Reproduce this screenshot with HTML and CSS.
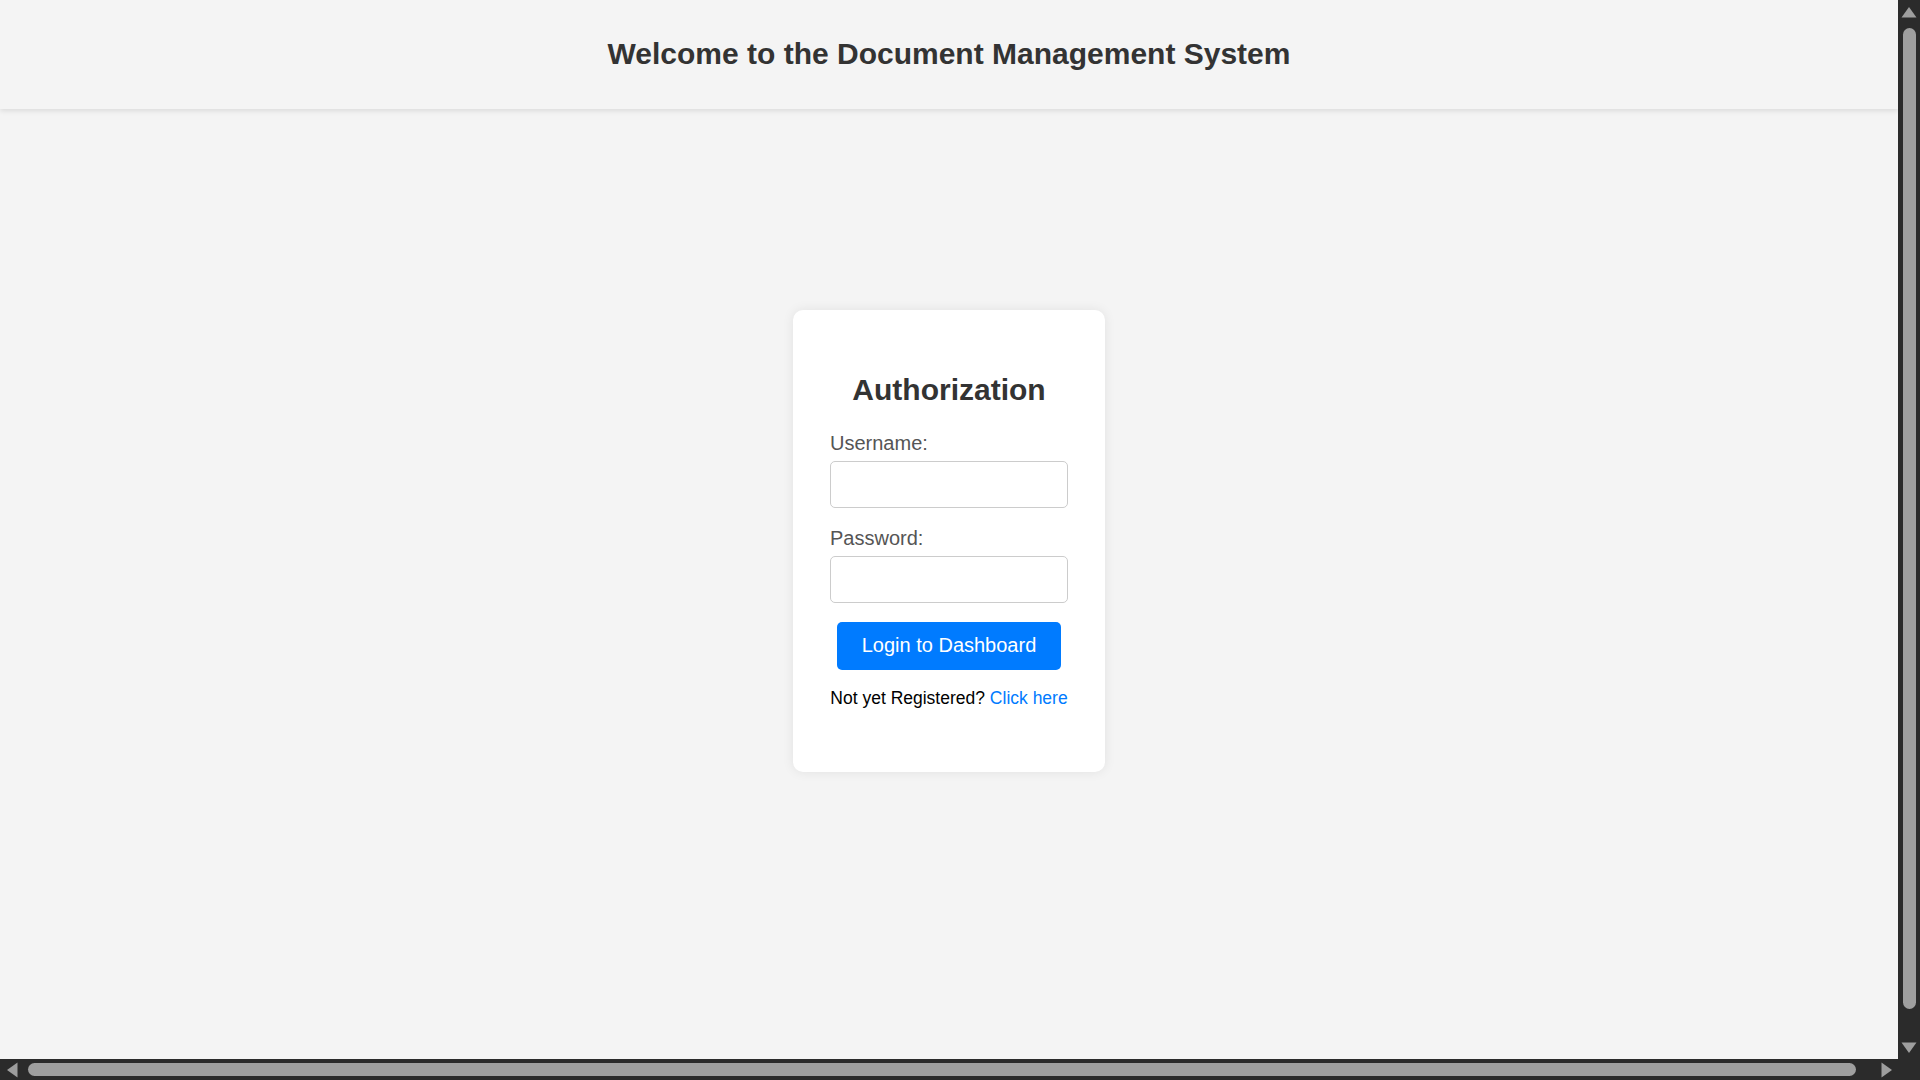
FILE: index.html
```html
<!DOCTYPE html>
<html lang="en">
<head>
<meta charset="utf-8">
<title>Document Management System</title>
<link rel="stylesheet" href="styles.css">
</head>
<body>
<div class="page">
  <header class="site-header">
    <h1 class="site-title">Welcome to the Document Management System</h1>
  </header>
  <main class="main">
    <form class="card">
      <h2 class="card-title">Authorization</h2>
      <label class="field-label" for="username">Username:</label>
      <input class="field-input" id="username" type="text">
      <label class="field-label" for="password">Password:</label>
      <input class="field-input" id="password" type="password">
      <div class="actions">
        <button class="btn" type="button">Login to Dashboard</button>
      </div>
      <p class="register">Not yet Registered? <a class="register-link" href="#">Click here</a></p>
    </form>
  </main>
</div>

<div class="sb-v" aria-hidden="true">
  <svg class="sb-arrow sb-up" width="16" height="11" viewBox="0 0 16 11"><path d="M8 0 L15.5 10.5 L0.5 10.5 Z" fill="#9e9e9e"/></svg>
  <div class="sb-thumb-v"></div>
  <svg class="sb-arrow sb-down" width="16" height="11" viewBox="0 0 16 11"><path d="M0.5 0.5 L15.5 0.5 L8 11 Z" fill="#9e9e9e"/></svg>
</div>
<div class="sb-h" aria-hidden="true">
  <svg class="sb-arrow sb-left" width="11" height="16" viewBox="0 0 11 16"><path d="M0 8 L10.5 0.5 L10.5 15.5 Z" fill="#9e9e9e"/></svg>
  <div class="sb-thumb-h"></div>
  <svg class="sb-arrow sb-right" width="11" height="16" viewBox="0 0 11 16"><path d="M0.5 0.5 L11 8 L0.5 15.5 Z" fill="#9e9e9e"/></svg>
</div>
<div class="sb-corner" aria-hidden="true"></div>
</body>
</html>
```

FILE: styles.css
```css
* { box-sizing: border-box; }

html, body {
  margin: 0;
  padding: 0;
  background: #f4f4f4;
  font-family: "Liberation Sans", Arial, sans-serif;
  overflow: hidden;
}

.page {
  margin-right: 22px;
  min-height: 1059px;
}

.site-header {
  background: #f4f4f4;
  height: 109px;
  padding-top: 37px;
  box-shadow: 0 2px 5px rgba(0, 0, 0, 0.1);
  text-align: center;
  position: relative;
}

.site-title {
  margin: 0;
  font-size: 30px;
  font-weight: bold;
  line-height: normal;
  color: #333;
}

.main {
  padding-top: 201px;
}

.card {
  width: 312px;
  margin: 0 auto;
  padding: 37px 37px 37.5px;
  background: #fff;
  border-radius: 10px;
  box-shadow: 0 0 12px rgba(0, 0, 0, 0.08);
}

.card-title {
  margin: 26px 0 25px;
  text-align: center;
  font-size: 30px;
  font-weight: bold;
  line-height: normal;
  color: #333;
}

.field-label {
  display: block;
  font-size: 20px;
  line-height: 23px;
  color: #555;
  margin-bottom: 6px;
}

.field-input {
  display: block;
  width: 100%;
  height: 47px;
  margin: 0 0 19px;
  padding: 12px;
  border: 1px solid #ccc;
  border-radius: 5px;
  font-size: 20px;
  font-family: inherit;
  background: #fff;
}

.actions {
  text-align: center;
}

.btn {
  height: 48px;
  padding: 0 25px 1px;
  border: none;
  border-radius: 5px;
  background: #007bff;
  color: #fff;
  font-family: inherit;
  font-size: 20px;
  line-height: 47px;
  cursor: pointer;
}

.register {
  margin: 18px 0 26px;
  text-align: center;
  font-size: 17.5px;
  line-height: 20px;
  color: #000;
}

.register-link {
  color: #007bff;
  text-decoration: none;
}

/* browser scrollbars overlay */
.sb-v {
  position: fixed;
  top: 0;
  right: 0;
  width: 22px;
  height: 1059px;
  background: #2b2b2b;
}

.sb-h {
  position: fixed;
  left: 0;
  bottom: 0;
  width: 1898px;
  height: 21px;
  background: #2b2b2b;
}

.sb-corner {
  position: fixed;
  right: 0;
  bottom: 0;
  width: 22px;
  height: 21px;
  background: #2b2b2b;
}

.sb-arrow { position: absolute; display: block; }
.sb-up { left: 3px; top: 7px; }
.sb-down { left: 3px; top: 1042px; }
.sb-left { left: 7px; top: 2.5px; }
.sb-right { left: 1881px; top: 2.5px; }

.sb-thumb-v {
  position: absolute;
  left: 5px;
  top: 28px;
  width: 13px;
  height: 981px;
  border-radius: 6.5px;
  background: #9f9f9f;
}

.sb-thumb-h {
  position: absolute;
  left: 28px;
  top: 4px;
  width: 1828px;
  height: 13px;
  border-radius: 6.5px;
  background: #9f9f9f;
}
```
